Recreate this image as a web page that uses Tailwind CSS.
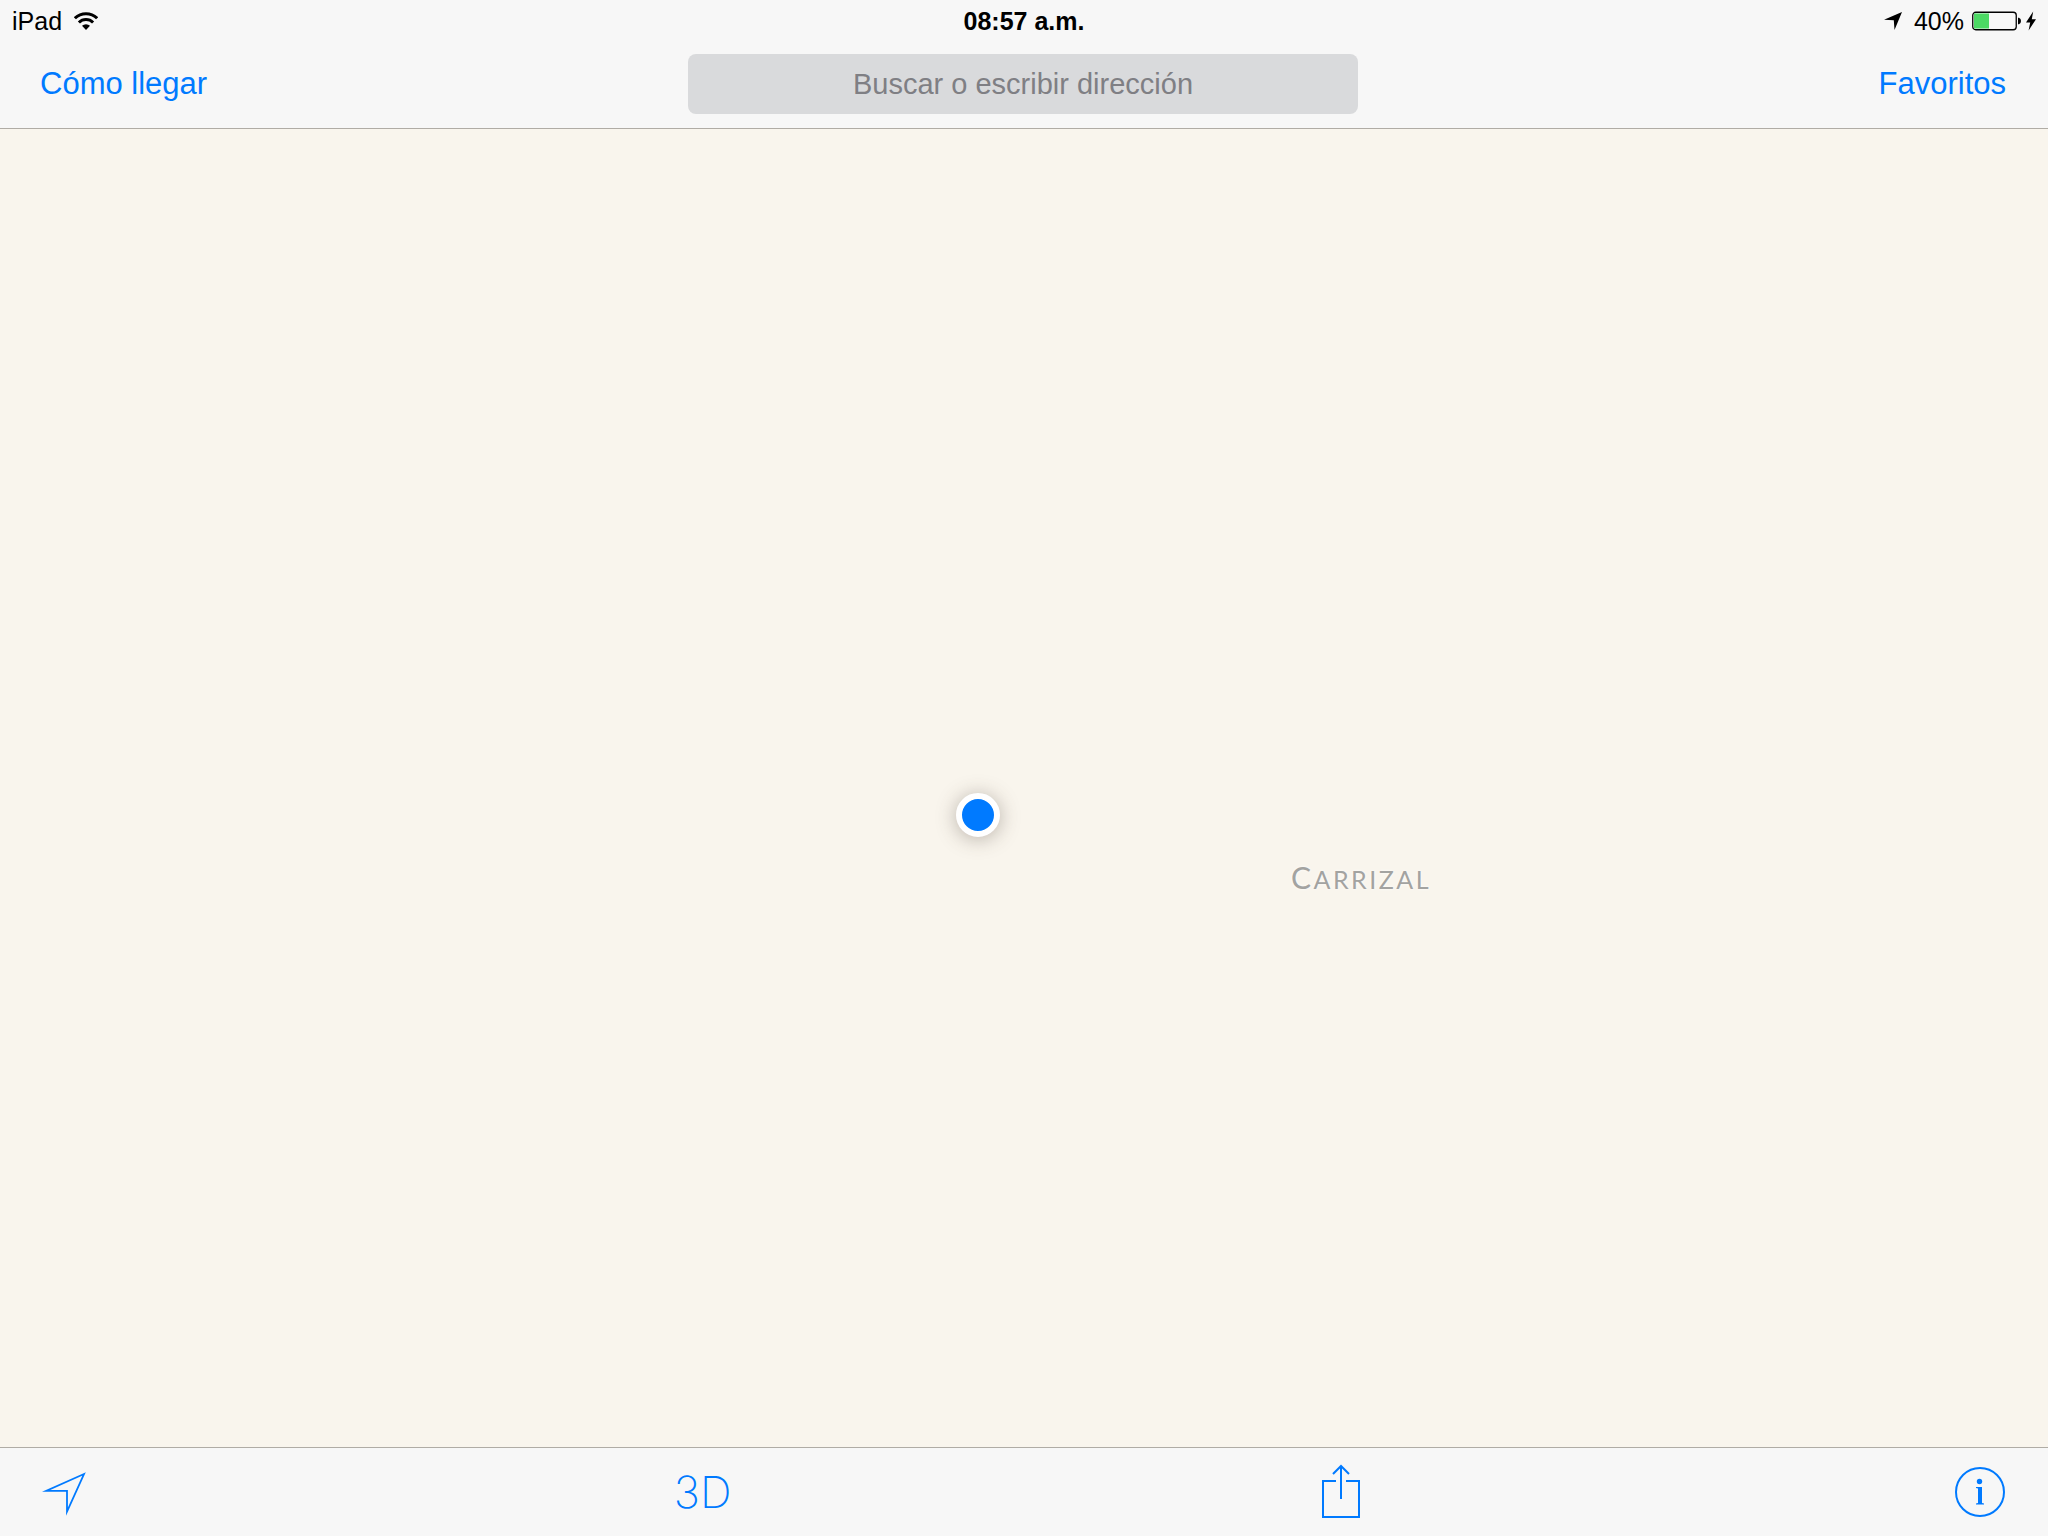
<!DOCTYPE html>
<html lang="es">
<head>
  <meta charset="UTF-8">
  <meta name="viewport" content="width=device-width, initial-scale=1">
  <title>Mapas</title>
  <script src="https://cdn.jsdelivr.net/npm/@tailwindcss/browser@4"></script>
</head>
<body class="min-h-screen flex flex-col bg-[#f7f7f7] text-black font-['Liberation_Sans',Arial,sans-serif]">

  <header class="border-b border-[#b0aca5]">
    <!-- Status bar -->
    <div class="grid grid-cols-3 items-center h-10 px-3 pt-0.5 text-[25px] leading-8">
      <div class="flex items-center gap-3">
        <span>iPad</span>
        <svg class="w-6 h-[18px]" viewBox="0 0 24 18" fill="none" stroke="#000" stroke-width="3">
          <path d="M0.9 6.3a15.8 15.8 0 0 1 22.2 0"/>
          <path d="M4.9 10.5a10.1 10.1 0 0 1 14.2 0"/>
          <path d="M12 18l-4-4.2a5.8 5.8 0 0 1 8 0z" fill="#000" stroke="none"/>
        </svg>
      </div>
      <div class="text-center font-bold">08:57 a.m.</div>
      <div class="flex items-center justify-end">
        <svg class="w-[18px] h-[18px] mr-3" viewBox="0 0 18 18"><path d="M18 0L10.5 18L9.8 8.3L0 7.8z"/></svg>
        <span class="mr-2">40%</span>
        <svg class="w-[50px] h-5 mr-1" viewBox="0 0 50 20">
          <rect x="0.75" y="1.25" width="43.5" height="17.5" rx="3" fill="none" stroke="#000" stroke-width="1.3"/>
          <rect x="2" y="2.5" width="15" height="15" fill="#4cd964"/>
          <path d="M46 6.8h1q2 1 2 3.2t-2 3.2h-1z"/>
        </svg>
        <svg class="w-[10px] h-5" viewBox="0 0 10 20"><path d="M7.2 0.5L0 11.5h4.2L2.6 19.5L10 8.2H5.8z"/></svg>
      </div>
    </div>

    <!-- Navigation bar -->
    <nav class="grid grid-cols-3 items-center h-[88px] pl-10 pr-[42px] text-[31px] leading-9 text-[#007aff]">
      <a href="#" class="justify-self-start">Cómo llegar</a>
      <input type="text" aria-label="Buscar" placeholder="Buscar o escribir dirección" class="justify-self-center w-[670px] h-[60px] rounded-lg bg-[#d9dadc] text-center text-[29px] text-black placeholder:text-[#7f7f84] outline-none">
      <a href="#" class="justify-self-end">Favoritos</a>
    </nav>
  </header>

  <!-- Map -->
  <main class="relative flex-1 overflow-hidden bg-[#f9f5ed]">
    <div class="absolute left-[calc(50%-46px)] top-[calc(50%+27px)] -translate-1/2 size-11 rounded-full bg-[#007aff] border-6 border-white shadow-[0_2px_20px_rgba(80,65,55,0.38)]"></div>
    <div class="absolute left-[calc(50%+337px)] top-[calc(50%+90px)] -translate-1/2 font-[Lato,sans-serif] text-[25px] leading-9 tracking-widest text-[#a3a3a1] [text-shadow:0_0_3px_#fff]"><span class="text-[30px]">C</span>ARRIZAL</div>
  </main>

  <!-- Toolbar -->
  <footer class="flex items-center justify-between h-[89px] pl-10 pr-11 border-t border-[#b0aca5] text-[#007aff]">
    <button aria-label="Mi ubicación" class="w-12 flex justify-center">
      <svg class="w-11 h-12" viewBox="0 -4 44 48" fill="none" stroke="currentColor" stroke-width="1.8" stroke-miterlimit="10">
        <path d="M42 2L4 18.9h21v20.6z"/>
      </svg>
    </button>
    <button class="w-12 flex justify-center font-[Inter,sans-serif] font-extralight text-[44px] leading-none">3D</button>
    <button aria-label="Compartir" class="w-12 flex justify-center">
      <svg class="w-[38px] h-14" viewBox="0 0 38 56" fill="none" stroke="currentColor" stroke-width="2">
        <path d="M14 17H1v36h36V17H24"/>
        <path d="M19 35V2"/>
        <path d="M11 10l8-8l8 8"/>
      </svg>
    </button>
    <button aria-label="Información" class="w-12 flex justify-center">
      <svg class="size-[50px] shrink-0" viewBox="0 0 50 50">
        <circle cx="25" cy="25" r="24" fill="none" stroke="currentColor" stroke-width="2"/>
        <circle cx="24.5" cy="14.5" r="2.7" fill="currentColor"/>
        <path d="M21 20h6v16l2 .6v.9h-8v-.9l2-.6V21.5l-2-.6z" fill="currentColor"/>
      </svg>
    </button>
  </footer>

</body>
</html>
